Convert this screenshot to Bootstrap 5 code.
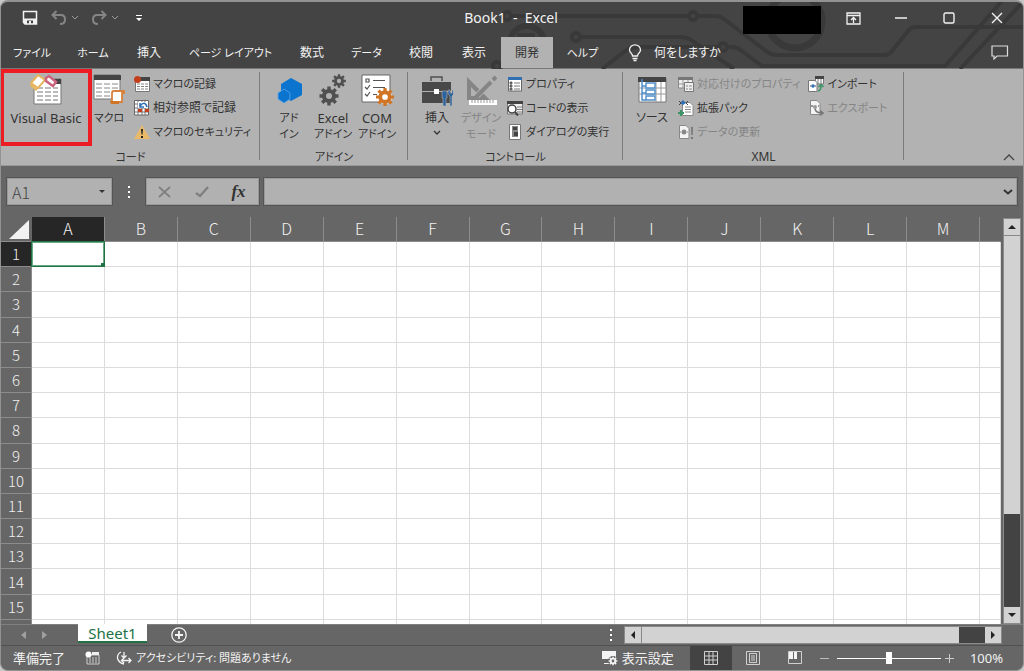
<!DOCTYPE html>
<html lang="ja">
<head>
<meta charset="utf-8">
<meta name="viewport" content="width=device-width, initial-scale=1">
<title>Book1 - Excel</title>
<link href="https://cdn.jsdelivr.net/npm/bootstrap@5.3.0/dist/css/bootstrap.min.css" rel="stylesheet">
<style>
:root{--dark:#444;--mid:#666;--rib:#b2b2b2;--line:#8c8c8c;--ink:#333;--green:#217346}
body{background:#c8c8c8;font-family:"Noto Sans","Noto Sans CJK JP",sans-serif;font-size:12px;line-height:16px;font-feature-settings:"palt"}
button,input{font:inherit;font-feature-settings:inherit;color:inherit;border:0;padding:0;background:none;border-radius:0}
svg{display:block;flex:none}
.kana{font-size:11px}
.latin{font-size:13px}
.app{border:1px solid #929292;border-top-width:2px;border-radius:8px;background:var(--mid);overflow:hidden}
.top-area{background:var(--dark);color:#f2f2f2}
.circuit{position:absolute;right:-1px;top:-2px}
.title-row{display:grid;grid-template-columns:1fr auto 1fr;height:35px;padding-bottom:3px;padding-right:2px}
.book-title{font-size:14px}
.win-btn{width:48px}
.account{width:78px;height:28px;background:#000}
.menu-row{height:31px}
.tab-strip{display:grid;grid-template-columns:62px 60px 52px 111px 52px 57px 52px 54px 52px 59px}
.tab-strip button{white-space:nowrap}
.tab-strip .current{background:var(--rib);color:var(--ink)}
.comment-btn{margin-right:14px}
.ribbon{background:var(--rib);color:var(--ink);height:98px;border-top:1px solid #777;border-bottom:1px solid #999}
.rgroup{position:relative;display:flex;flex:none;flex-direction:column;justify-content:space-between}
.rgroup::after{content:"";position:absolute;right:0;top:3px;bottom:5px;width:1px;background:#7c7c7c}
.g-code{width:259px}.g-addin{width:148px}.g-ctl{width:215px}.g-xml{width:281px}
.tools{height:77px}
.inset-tools{padding-left:7px}
.big{display:flex;flex:none;flex-direction:column;align-items:center;width:44px;padding-top:5px;white-space:nowrap}
.big svg{margin-bottom:4px}
.big.vb{width:92px;height:77px;border:4px solid #ed1c24;padding-top:1px;margin-left:-1px}
.big.narrow{width:34px}
.stack{padding-top:3px}
.small-btn{display:flex;align-items:center;gap:3px;height:24px;white-space:nowrap;font-size:11px}
.small-btn.kanji{font-size:12px}
.off{color:#858585}
.rlabel{text-align:center;line-height:16px}
.fbar{height:51px;padding:11px 5px 11px 5px;color:var(--ink)}
.fbox{background:#b1b1b1;border:1px solid #555;box-shadow:inset 0 0 0 1px #999}
.namebox{width:107px}
.namebox input{width:84px;font:16px "Noto Sans CJK JP",sans-serif;font-weight:300;color:#444;padding-left:5px}
.grip{margin:0 15px}
.fx-tools{width:115px;margin-right:3px}
.fx-tools button{width:37px}
.fx{font:italic bold 17px "Liberation Serif",serif}
.sheet-wrap{min-height:0}
table.cells{table-layout:fixed;border-collapse:separate;border-spacing:0;width:100%;height:100%;font:16px/20px "Noto Sans CJK JP",sans-serif;font-weight:300}
.cells th{font-weight:300;color:#f0f0f0;text-align:center;padding:0;background:var(--mid)}
.cells thead th{height:25px;border-right:1px solid var(--line);border-bottom:1px solid var(--line);padding-bottom:2px}
.cells thead th.corner{padding:0}
.cells thead th.edge{border-right-color:var(--mid)}
.cells tbody th{border-right:1px solid var(--line);border-bottom:1px solid var(--line);font-size:15px}
.cells .sel{background:#262626}
.cells td{background:#fff;border-right:1px solid #dcdcdc;border-bottom:1px solid #dcdcdc;padding:0;position:relative}
.cells .stub th,.cells .stub td{height:4px;border-bottom:0;line-height:0}
.cells .picked::before{content:"";position:absolute;inset:-1px -1px -1px -1px;border:1px solid var(--green);box-shadow:inset 0 0 0 1px #6aa884}
.cells .picked::after{content:"";position:absolute;right:-2px;bottom:-2px;width:5px;height:5px;background:var(--green)}
.rowcol{width:31px}.tailcol{width:21px}
.vscroll{flex:none;width:18px;margin:1px 2px 0 2px;border:1px solid #8a8a8a}
.sq{background:#d2d2d2;flex:0 0 16px;display:flex;align-items:center;justify-content:center}
.thumb{background:#d2d2d2;flex:3}
.trough{background:#434343;flex:1}
.vscroll .thumb{border-top:1px solid #888}
.sheetbar{height:22px;border-bottom:1px solid #505050;border-top:1px solid #808080;color:#fff}
.sheet-tab{background:#fff;color:var(--green);border-bottom:2px solid var(--green);width:69px;font-size:15px;margin-left:31px;margin-top:-1px;height:19px;line-height:16px}
.hscroll{width:378px;height:18px;margin:1px 21px 0 0;border:1px solid #8a8a8a}
.hscroll .thumb{flex:12;border-left:1px solid #888}
.status{height:24px;color:#f2f2f2}
.view{width:42px;height:24px;display:flex;align-items:center;justify-content:center}
.view.chosen{background:#434343}
.zoomer{appearance:none;width:104px;height:14px;background:linear-gradient(#fff,#fff) center/100% 1px no-repeat}
.zoomer::-webkit-slider-thumb{appearance:none;width:6px;height:12px;background:#fff}
</style>
</head>
<body>
<svg width="0" height="0" class="position-absolute" aria-hidden="true">
<defs>
<g id="gear"><circle r="5" fill="none" stroke-width="4"/><g stroke-width="3.4"><path d="M0-6V-9.500M0 6V9.500M-6 0H-9.500M6 0H9.500M-4.500-4.500L-6.800-6.800M4.500-4.500L6.800-6.800M-4.500 4.500L-6.800 6.800M4.500 4.500L6.800 6.800"/></g></g>
</defs>
</svg>
<div class="app vh-100 d-flex flex-column">
<header class="top-area position-relative">
<svg class="circuit" width="684" height="69" viewBox="0 0 684 69" fill="none" stroke="#393939" stroke-width="4" aria-hidden="true">
<circle cx="167" cy="16" r="4"/><path d="M171 16H349M357 16H376Q380 16 384 19L426 51Q432 55 437 55H544Q549 55 552 51L568 31Q571 27 575 27H684"/>
<circle cx="353" cy="16" r="4"/><circle cx="187" cy="43" r="17" stroke-width="6"/><path d="M177 35H195"/>
<circle cx="236" cy="37" r="4"/><path d="M240 37H340Q348 37 354 42L394 69M262 69L284 52Q290 47 298 47H379"/>
<circle cx="383" cy="47" r="4"/><path d="M387 47H392Q397 47 402 51L422 66H605L662 1M620 69L682 3"/>
<circle cx="455" cy="21" r="27" stroke-width="7"/><circle cx="157" cy="66" r="4"/>
</svg>
<div class="title-row position-relative">
<div class="d-flex align-items-center ps-3">
<button class="ms-1" aria-label="上書き保存"><svg width="18" height="16" viewBox="0 0 18 16"><path d="M3 1.500H15.500V14H4L2.500 12.500V1.500Z" fill="none" stroke="#f2f2f2" stroke-width="1.500"/><path d="M3 8.500H15V14H12V10.500H6V14H3Z" fill="#f2f2f2"/><path d="M8 11H10V14H8Z" fill="#f2f2f2"/></svg></button>
<button class="ms-2 ps-1" aria-label="元に戻す"><svg width="16" height="16" viewBox="0 0 16 16" fill="none" stroke="#858585" stroke-width="2"><path d="M5.500 1L1.500 5L5.500 9M2 5H10Q14 5 14 9.500T9 14"/></svg></button>
<button class="ms-1" aria-label="元に戻すの一覧"><svg width="8" height="6" viewBox="0 0 8 6" fill="none" stroke="#999"><path d="M1 1L4 4L7 1"/></svg></button>
<button class="ms-2 ps-1" aria-label="やり直し"><svg width="16" height="16" viewBox="0 0 16 16" fill="none" stroke="#858585" stroke-width="2"><path d="M10.500 1L14.500 5L10.500 9M14 5H6Q2 5 2 9.500T7 14"/></svg></button>
<button class="ms-1" aria-label="やり直しの一覧"><svg width="8" height="6" viewBox="0 0 8 6" fill="none" stroke="#999"><path d="M1 1L4 4L7 1"/></svg></button>
<button class="ms-3" aria-label="クイック アクセス ツール バーのカスタマイズ"><svg width="8" height="8" viewBox="0 0 8 8"><path d="M1 1H7V2H1ZM1 4H7L4 7Z" fill="#fff"/></svg></button>
</div>
<div class="book-title align-self-center">Book1 &nbsp;-&nbsp; Excel</div>
<div class="d-flex justify-content-end">
<div class="account mt-1 me-2"></div>
<button class="win-btn d-flex align-items-center justify-content-center" aria-label="リボンの表示オプション"><svg width="15" height="13" viewBox="0 0 15 13" fill="none" stroke="#f2f2f2" stroke-width="1.300"><path d="M1 1H14V12H1ZM1 3.500H14M7.500 11V5.500M5 8L7.500 5.500L10 8"/></svg></button>
<button class="win-btn d-flex align-items-center justify-content-center" aria-label="最小化"><svg width="12" height="12" viewBox="0 0 12 12"><path d="M0 6H12" stroke="#f2f2f2" stroke-width="1.300"/></svg></button>
<button class="win-btn d-flex align-items-center justify-content-center" aria-label="最大化"><svg width="12" height="12" viewBox="0 0 12 12"><rect x="1" y="1" width="10" height="10" rx="1.500" fill="none" stroke="#f2f2f2" stroke-width="1.400"/></svg></button>
<button class="win-btn d-flex align-items-center justify-content-center" aria-label="閉じる"><svg width="12" height="12" viewBox="0 0 12 12"><path d="M1 1L11 11M11 1L1 11" stroke="#f2f2f2" stroke-width="1.400"/></svg></button>
</div>
</div>
<div class="menu-row position-relative d-flex">
<nav class="tab-strip" aria-label="リボン タブ">
<button class="kana">ファイル</button><button class="kana">ホーム</button><button>挿入</button><button class="kana">ページ レイアウト</button><button>数式</button><button class="kana">データ</button><button>校閲</button><button>表示</button><button class="current">開発</button><button class="kana">ヘルプ</button>
</nav>
<button class="d-flex align-items-center ms-3 gap-2"><svg width="14" height="18" viewBox="0 0 14 18" fill="none" stroke="#f2f2f2" stroke-width="1.300"><path d="M4.500 12Q4.500 10.500 3 9Q1.500 7.500 1.500 6A5.500 5.200 0 0 1 12.500 6Q12.500 7.500 11 9Q9.500 10.500 9.500 12ZM4.500 14.500H9.500M5.500 16.500H8.500"/></svg><span class="ps-1">何をしますか</span></button>
<button class="comment-btn ms-auto ps-1" aria-label="コメント"><svg width="18" height="15" viewBox="0 0 18 15" fill="none" stroke="#ddd" stroke-width="1.200"><path d="M1 1H16.500V11H6L3 14V11H1Z"/></svg></button>
</div>
</header>

<section class="ribbon d-flex" aria-label="開発">
<div class="rgroup g-code">
<div class="tools d-flex">
<button class="big vb latin"><svg width="32" height="32" viewBox="0 0 32 32"><path d="M4 5H31V30H4Z" fill="#fff" stroke="#777"/><path d="M22 5H31V10H22Z" fill="#444"/><path d="M7 14H28M7 18H28M7 22H28M7 26H28" stroke="#777" stroke-dasharray="6 2"/><path d="M1 9L8 1L15 6L8 14Z" fill="#fff" stroke="#e5b65e" stroke-width="2"/><path d="M1 10L8 15L6 17L0 12Z" fill="#e5b65e"/><path d="M16 4L19 2L26 8L23 12L16 7Z" fill="#fff" stroke="#cc6480" stroke-width="2.500"/></svg>Visual Basic</button>
<button class="big narrow kana"><svg width="32" height="32" viewBox="0 0 32 32"><path d="M1 1H27V25H1Z" fill="#fff" stroke="#777"/><path d="M1 1H28V6H1Z" fill="#444"/><path d="M3 10H25M3 14H25M3 18H25M3 22H25" stroke="#888" stroke-dasharray="6 2"/><path d="M21 17H31V19H29V28H19V19Q19 17 21 17Z" fill="#fff" stroke="#d8823c" stroke-width="1.800"/><path d="M17 27H26V30H19Q17 30 17 27Z" fill="#d07426"/></svg>マクロ</button>
<div class="stack ms-2">
<button class="small-btn"><svg width="16" height="16" viewBox="0 0 16 16"><path d="M1.500 2.500H15.500V15.500H1.500Z" fill="#fff" stroke="#777"/><path d="M6 1H16V5H6Z" fill="#444"/><path d="M3 8H14M3 10.500H14M3 13H14" stroke="#888" stroke-dasharray="3 1"/><circle cx="3.500" cy="3.500" r="3.500" fill="#c43e1c"/></svg>マクロの記録</button>
<button class="small-btn kanji"><svg width="16" height="16" viewBox="0 0 16 16"><path d="M.5.500H14.500V15H.5Z" fill="#fff" stroke="#666"/><path d="M4 1V15M8 1V15M11 1V15M1 4H14M1 8H14M1 12H14" stroke="#777"/><path d="M4 2H14V8H4Z" fill="#fff"/><path d="M6 3V7H10M6 6Q11 0 13 7" fill="none" stroke="#2f6fb2" stroke-width="1.600"/><path d="M4 9H8V12H4ZM11 9H15V12H11Z" fill="#c43e1c"/></svg>相対参照で記録</button>
<button class="small-btn"><svg width="16" height="16" viewBox="0 0 16 16"><path d="M8 1L16 15H0Z" fill="#e8b968"/><path d="M7 5H9L8.500 10.500H7.500ZM7 12H9V14H7Z" fill="#222"/></svg>マクロのセキュリティ</button>
</div>
</div>
<div class="rlabel kana">コード</div>
</div>
<div class="rgroup g-addin">
<div class="tools inset-tools d-flex">
<button class="big kana"><svg width="32" height="32" viewBox="0 0 32 32"><path d="M18 4L29 10V21L18 27L8 21V10Z" fill="#0a74cf"/><path d="M11 15L17 19V25L11 29L5 25V19Z" fill="#0a74cf" stroke="#5aa6e4" stroke-width=".8"/></svg>アド<br>イン</button>
<button class="big kana"><svg width="32" height="32" viewBox="0 0 32 32" stroke="#505050"><use href="#gear" transform="translate(12 22)"/><use href="#gear" transform="translate(22 7) scale(.72)"/></svg><span class="latin">Excel</span>アドイン</button>
<button class="big kana"><svg width="34" height="32" viewBox="0 0 34 32"><path d="M2 1H30V28H2Z" fill="#fff" stroke="#666"/><path d="M6 5H9V8H6ZM5 13L7 15L10 11M5 20L7 22L10 18M13 6.500H25M13 13.500H25M13 20.500H17" fill="none" stroke="#555" stroke-width="1.200"/><circle cx="25" cy="23" r="7" fill="#fff"/><use href="#gear" stroke="#d07426" transform="translate(25 23) scale(.95)"/></svg><span class="latin">COM</span>アドイン</button>
</div>
<div class="rlabel kana">アドイン</div>
</div>
<div class="rgroup g-ctl">
<div class="tools inset-tools d-flex">
<button class="big"><svg width="32" height="32" viewBox="0 0 32 32"><path d="M10 7V3H21V7" fill="none" stroke="#505050" stroke-width="1.500"/><path d="M1 8H30V17H1ZM1 18H30V29H1Z" fill="#484848"/><path d="M13 15H18V20H13Z" fill="#fff"/><path d="M21 17H26V24H25V32H22V24H21ZM27 16V20L29 22V32H31V22L33 20V16H31V19H29V16Z" fill="#2b62a0" stroke="#b2b2b2" stroke-width=".6"/></svg>挿入<svg class="mt-1" width="8" height="6" viewBox="0 0 8 6" fill="none" stroke="#333" stroke-width="1.300"><path d="M1 1L4 4L7 1"/></svg></button>
<button class="big off kana"><svg width="32" height="32" viewBox="0 0 32 32"><path d="M2 3L25 26H2ZM6 13V22H15Z" fill="#858585" fill-rule="evenodd"/><path d="M12 22L28 5" stroke="#b2b2b2" stroke-width="6"/><path d="M11 23L26 8M28 6L31 3" stroke="#858585" stroke-width="4"/><path d="M4 26H32V31H4Z" fill="#fff"/><path d="M7 26V29M10 26V29M13 26V29M16 26V29M19 26V29M22 26V29M25 26V29M28 26V29" stroke="#999"/></svg>デザイン<br>モード</button>
<div class="stack ps-1">
<button class="small-btn"><svg width="16" height="16" viewBox="0 0 16 16"><path d="M1.500 1.500H14.500V15H1.500Z" fill="#fff" stroke="#666"/><path d="M1 1H15V4H1Z" fill="#2f6fb2"/><path d="M3 6H5V8H3ZM3 9H5V11H3ZM3 12H5V14H3ZM7 7H13M7 10H13M7 13H13" fill="#555" stroke="#666" stroke-width=".9"/></svg>プロパティ</button>
<button class="small-btn"><svg width="16" height="16" viewBox="0 0 16 16"><path d="M.5 1.500H15.500V14H.5Z" fill="#eee" stroke="#777"/><path d="M0 1H16V4H0Z" fill="#444"/><path d="M10 7H15M10 9.500H15M10 12H15" stroke="#777"/><circle cx="5" cy="9" r="4" fill="#fff" stroke="#444" stroke-width="1.500"/><path d="M8 12L11 15.500" stroke="#444" stroke-width="2"/></svg>コードの表示</button>
<button class="small-btn"><svg width="16" height="16" viewBox="0 0 16 16"><path d="M2.500.500H13.500V15.500H2.500Z" fill="#fff" stroke="#777"/><path d="M5 2H11V13H5Z" fill="#888"/><path d="M6 3H10V6H6ZM7 8H11V12H7Z" fill="#444"/></svg>ダイアログの実行</button>
</div>
</div>
<div class="rlabel kana">コントロール</div>
</div>
<div class="rgroup g-xml">
<div class="tools inset-tools d-flex">
<button class="big"><svg width="32" height="32" viewBox="0 0 32 32"><path d="M3 4H30V28H3Z" fill="#fff" stroke="#777"/><path d="M2 3H30V8H2Z" fill="#444"/><path d="M3 14H30M3 20H30M20 8V28M25 8V28" stroke="#999"/><path d="M6 5V26H10M6 12H10M6 19H10" fill="none" stroke="#4f8fcb" stroke-width="1.500"/><path d="M10 9H19V14H10ZM10 16H19V20H10ZM10 22H19V26H10Z" fill="#fff" stroke="#4f8fcb" stroke-width="1.400"/></svg>ソース</button>
<div class="stack ps-1">
<button class="small-btn off"><svg width="16" height="16" viewBox="0 0 16 16"><path d="M.5 1.500H14.500V12H.5Z" fill="#eee" stroke="#888"/><path d="M0 1H15V4H0Z" fill="#777"/><path d="M5 4V12M10 4V12M1 8H14" stroke="#999"/><path d="M6.500 6.500H15.500V15.500H6.500Z" fill="#eee" stroke="#777"/><path d="M8 10H10M11 10H14M8 13H10M11 13H14" stroke="#888"/></svg>対応付けのプロパティ</button>
<button class="small-btn"><svg width="16" height="16" viewBox="0 0 16 16"><path d="M4.500 2.500H12L15 5.500V15.500H4.500Z" fill="#fff" stroke="#888"/><path d="M7 7H13M7 9.500H13M7 12H13" stroke="#888"/><path d="M5 0L8 3L5 5L2 3Z" fill="#2f6fb2"/><path d="M1 1L3 3L1 5M10 1L8 3L10 5" fill="none" stroke="#444"/><path d="M3 10V16M0 13H6" stroke="#3a9468" stroke-width="2.200"/></svg>拡張パック</button>
<button class="small-btn off"><svg width="16" height="16" viewBox="0 0 16 16"><path d="M1.500 1.500H8L11 4.500V14.500H1.500Z" fill="#f4f4f4" stroke="#888"/><circle cx="6" cy="8" r="2.500" fill="#888"/><path d="M2 8H10" stroke="#888" stroke-dasharray="1 6"/><path d="M13 3H15L14.700 11H13.300ZM13 13H15V15H13Z" fill="#777"/></svg>データの更新</button>
</div>
<div class="stack ps-2">
<button class="small-btn"><svg width="16" height="16" viewBox="0 0 16 16"><path d="M7.500 1.500H15.500V8H7.500Z" fill="#fff" stroke="#777"/><path d="M7 0H16V3H7Z" fill="#444"/><path d="M10 3V8M13 3V8" stroke="#777"/><path d="M.5 4.500H7L9 6.500V15.500H.5Z" fill="#fff" stroke="#777"/><circle cx="5" cy="10" r="1.800" fill="#2f6fb2"/><path d="M2 10H3M7 10H8" stroke="#444"/><path d="M10 15Q13 15 13 9M10.500 11L13 8.500L15.500 11" fill="none" stroke="#3a9468" stroke-width="1.500"/></svg>インポート</button>
<button class="small-btn off"><svg width="16" height="16" viewBox="0 0 16 16"><path d="M2.500.500H9L12 3.500V14.500H2.500Z" fill="#f4f4f4" stroke="#888"/><circle cx="7" cy="7" r="2" fill="#999"/><path d="M3 6H5M10 6H11M7 9Q8 13 14 13M12 10.500L15 13L12 15.500" fill="none" stroke="#777" stroke-width="1.500"/></svg>エクスポート</button>
</div>
</div>
<div class="rlabel">XML</div>
</div>
<button class="ms-auto align-self-end me-2 pb-1" aria-label="リボンを折りたたむ"><svg width="12" height="8" viewBox="0 0 12 8" fill="none" stroke="#444" stroke-width="1.300"><path d="M1 7L6 2L11 7"/></svg></button>
</section>

<div class="fbar d-flex">
<div class="namebox fbox d-flex align-items-center"><input value="A1" aria-label="名前ボックス"><button class="ms-2" aria-label="名前の一覧"><svg width="6" height="4" viewBox="0 0 6 4"><path d="M0 0H6L3 3Z" fill="#333"/></svg></button></div>
<svg class="grip align-self-center" width="2" height="12" viewBox="0 0 2 12" fill="#fff"><path d="M0 0H2V2H0ZM0 5H2V7H0ZM0 10H2V12H0Z"/></svg>
<div class="fx-tools fbox d-flex align-items-center">
<button class="d-flex justify-content-center" aria-label="キャンセル"><svg width="14" height="14" viewBox="0 0 14 14"><path d="M1 2L12 12M12 2L1 12" stroke="#808080" stroke-width="1.700"/></svg></button>
<button class="d-flex justify-content-center" aria-label="入力"><svg width="14" height="14" viewBox="0 0 14 14" fill="none"><path d="M1 8L5 11L13 2" stroke="#808080" stroke-width="2.400"/></svg></button>
<button class="fx" aria-label="関数の挿入">fx</button>
</div>
<div class="fbox d-flex flex-fill align-items-center pe-1"><input class="flex-fill" aria-label="数式バー"><button aria-label="数式バーの展開"><svg width="10" height="8" viewBox="0 0 10 8" fill="none" stroke="#333" stroke-width="2"><path d="M1 2L5 5.500L9 2"/></svg></button></div>
</div>

<div class="sheet-wrap d-flex flex-fill">
<div class="flex-fill">
<table class="cells">
<colgroup><col class="rowcol"><col span="13"><col class="tailcol"></colgroup>
<thead><tr><th class="corner edge"><svg width="30" height="24" viewBox="0 0 30 24" aria-label="すべて選択"><path d="M8 22L28 3V22Z" fill="#f2f2f2"/></svg></th><th class="sel">A</th><th>B</th><th>C</th><th>D</th><th>E</th><th>F</th><th>G</th><th>H</th><th>I</th><th>J</th><th>K</th><th>L</th><th>M</th><th class="edge"></th></tr></thead>
<tbody id="rows"></tbody>
</table>
</div>
<div class="vscroll d-flex flex-column">
<button class="sq" aria-label="上へ"><svg width="8" height="4" viewBox="0 0 8 4"><path d="M0 4L4 0L8 4Z" fill="#222"/></svg></button>
<div class="thumb"></div><div class="trough"></div>
<button class="sq" aria-label="下へ"><svg width="8" height="4" viewBox="0 0 8 4"><path d="M0 0L4 4L8 0Z" fill="#222"/></svg></button>
</div>
</div>

<div class="sheetbar d-flex">
<div class="d-flex align-items-center ms-3 ps-1 gap-3">
<button aria-label="前のシート"><svg width="5" height="8" viewBox="0 0 5 8"><path d="M5 0V8L0 4Z" fill="#a0a0a0"/></svg></button>
<button aria-label="次のシート"><svg width="5" height="8" viewBox="0 0 5 8"><path d="M0 0V8L5 4Z" fill="#a0a0a0"/></svg></button>
</div>
<button class="sheet-tab">Sheet1</button>
<button class="ms-4" aria-label="新しいシート"><svg width="16" height="16" viewBox="0 0 16 16" fill="none" stroke="#f4f4f4" stroke-width="1.300"><circle cx="8" cy="8" r="7.200"/><path d="M8 4V12M4 8H12" stroke-width="1.800"/></svg></button>
<svg class="ms-auto me-2 align-self-center" width="6" height="12" viewBox="0 0 6 12" fill="#fff"><path d="M0 0H2V2H0ZM0 5H2V7H0ZM0 10H2V12H0Z"/></svg>
<div class="hscroll d-flex">
<button class="sq" aria-label="左へ"><svg width="4" height="8" viewBox="0 0 4 8"><path d="M4 0V8L0 4Z" fill="#222"/></svg></button>
<div class="thumb"></div><div class="trough"></div>
<button class="sq" aria-label="右へ"><svg width="4" height="8" viewBox="0 0 4 8"><path d="M0 0V8L4 4Z" fill="#222"/></svg></button>
</div>
</div>

<footer class="status d-flex align-items-center">
<span class="latin ms-2 ps-1">準備完了</span>
<button class="ms-3 ps-1" aria-label="マクロの記録"><svg width="15" height="14" viewBox="0 0 15 14"><path d="M2 4H14V13H2Z" fill="none" stroke="#ccc"/><path d="M7 1H14V4H7Z" fill="#eee"/><path d="M4 7H13M4 9H13M4 11H13" stroke="#ccc" stroke-dasharray="2 1"/><circle cx="3.500" cy="3.500" r="3" fill="#fff"/></svg></button>
<button class="kana d-flex align-items-center ms-3 gap-1"><svg width="16" height="16" viewBox="0 0 16 16" fill="none" stroke="#f2f2f2" stroke-width="1.300"><path d="M5 2Q1 4 1.500 8.500Q3 13 8 14M8 2V8M5.500 5.500L8 8L10.500 5.500M6 10.500H15M8 8L5.500 10.500L8 13M12.500 8L15 10.500L12.500 13"/></svg>アクセシビリティ: 問題ありません</button>
<button class="latin d-flex align-items-center ms-auto me-3 gap-1"><svg width="17" height="16" viewBox="0 0 17 16"><path d="M1 1H15V9H1ZM3 13H8V14H3Z" fill="#f4f4f4"/><circle cx="12" cy="11" r="5" fill="#666"/><use href="#gear" stroke="#f4f4f4" transform="translate(12 11) scale(.46)"/></svg>表示設定</button>
<button class="view chosen" aria-label="標準"><svg width="14" height="14" viewBox="0 0 14 14" fill="none" stroke="#d0d0d0"><path d="M.5.500H13.500V13.500H.5ZM5 0V14M9 0V14M0 5H14M0 9H14"/></svg></button>
<button class="view" aria-label="ページ レイアウト"><svg width="14" height="14" viewBox="0 0 14 14" fill="none" stroke="#d0d0d0"><path d="M.5.500H13.500V13.500H.5ZM3.500 2.500H10.500V11.500H3.500ZM5 5H9M5 7H9M5 9H9"/></svg></button>
<button class="view" aria-label="改ページ プレビュー"><svg width="14" height="14" viewBox="0 0 14 14"><path d="M.5.500H13.500V12.500H.5Z" fill="none" stroke="#d0d0d0"/><path d="M1 1H5V8H1ZM6 1H9V8H6Z" fill="#f4f4f4"/></svg></button>
<button class="ms-1" aria-label="縮小"><svg width="9" height="9" viewBox="0 0 9 9"><path d="M0 4.500H9" stroke="#bbb"/></svg></button>
<input type="range" class="zoomer ms-2" min="0" max="200" value="100" aria-label="ズーム">
<button class="ms-1" aria-label="拡大"><svg width="9" height="9" viewBox="0 0 9 9"><path d="M0 4.500H9M4.500 0V9" stroke="#ccc"/></svg></button>
<button class="latin ms-3 me-3 pe-1">100%</button>
</footer>
</div>
<script>
const body=document.getElementById('rows');
for(let r=1;r<=16;r++){
  const tr=body.insertRow(), th=document.createElement('th');
  if(r<16) th.textContent=r; else tr.className='stub';
  if(r===1) th.className='sel';
  tr.append(th);
  for(let c=0;c<14;c++){const td=tr.insertCell(); if(r===1&&c===0) td.className='picked';}
}
</script>
<script src="https://cdn.jsdelivr.net/npm/bootstrap@5.3.0/dist/js/bootstrap.bundle.min.js"></script>
</body>
</html>
